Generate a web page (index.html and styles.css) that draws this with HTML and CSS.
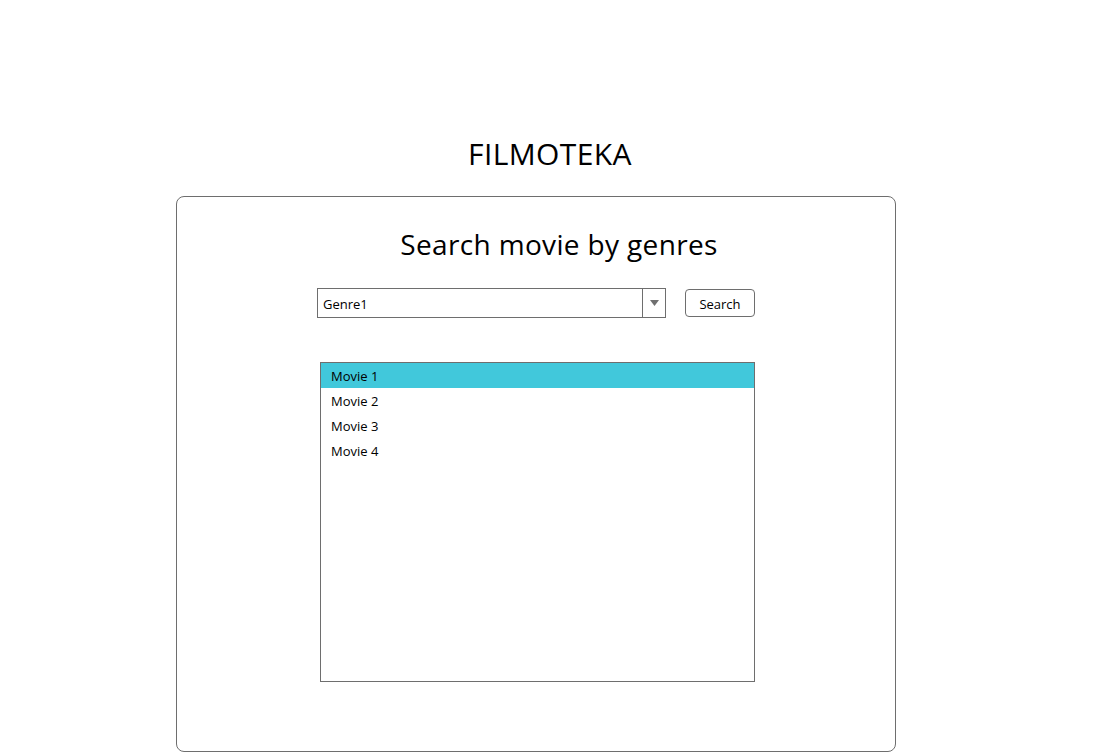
FILE: index.html
```html
<!DOCTYPE html>
<html>
<head>
<meta charset="utf-8">
<link rel="stylesheet" href="styles.css">
</head>
<body>
<div class="page">
  <h1 class="title">FILMOTEKA</h1>
  <div class="card">
    <h2 class="heading">Search movie by genres</h2>
    <div class="controls">
      <div class="combo">
        <span class="combo-value">Genre1</span>
        <span class="combo-btn"><svg width="9" height="6" viewBox="0 0 9 6"><path d="M0 0H9L4.5 6Z" fill="#707070"/></svg></span>
      </div>
      <button class="search-btn">Search</button>
    </div>
    <ul class="list">
      <li class="item selected">Movie 1</li>
      <li class="item">Movie 2</li>
      <li class="item">Movie 3</li>
      <li class="item">Movie 4</li>
    </ul>
  </div>
</div>
</body>
</html>
```
FILE: styles.css
```css
html, body {
  margin: 0;
  padding: 0;
  background: #fff;
  font-family: "Open Sans", "Noto Sans", sans-serif;
  color: #000;
}
.page {
  width: 1100px;
  height: 752px;
  overflow: hidden;
  display: flex;
  flex-direction: column;
}
.title {
  margin: 136px 0 0 0;
  text-align: center;
  font-weight: 400;
  font-size: 30px;
  line-height: 36px;
  height: 60px;
  letter-spacing: 0.4px;
}
.card {
  margin-left: 176px;
  width: 720px;
  height: 556px;
  box-sizing: border-box;
  border: 1px solid #6e6e6e;
  border-radius: 8px;
  display: flex;
  flex-direction: column;
  padding: 29px 0 0 0;
}
.heading {
  margin: 0;
  padding-left: 46px;
  text-align: center;
  font-weight: 400;
  font-size: 28px;
  line-height: 36px;
  letter-spacing: 0.35px;
}
.controls {
  display: flex;
  align-items: center;
  margin: 26px 0 0 140px;
  gap: 19px;
}
.combo {
  width: 349px;
  height: 30px;
  box-sizing: border-box;
  border: 1px solid #6e6e6e;
  display: flex;
  align-items: center;
}
.combo-value {
  flex: 1;
  padding-left: 5px;
  padding-top: 1px;
  font-size: 13px;
}
.combo-btn {
  width: 22px;
  height: 100%;
  border-left: 1px solid #6e6e6e;
  display: flex;
  align-items: center;
  justify-content: center;
}
.search-btn {
  width: 70px;
  height: 28px;
  box-sizing: border-box;
  border: 1px solid #6e6e6e;
  border-radius: 4px;
  background: #fff;
  font-family: inherit;
  font-size: 13px;
  color: #000;
  padding: 1px 0 0 0;
}
.list {
  list-style: none;
  margin: 44px 0 0 143px;
  padding: 0;
  width: 435px;
  height: 320px;
  box-sizing: border-box;
  border: 1px solid #6e6e6e;
}
.item {
  height: 24px;
  padding-top: 1px;
  line-height: 25px;
  padding-left: 10px;
  font-size: 13px;
}
.item.selected {
  background: #41c8db;
}
```
